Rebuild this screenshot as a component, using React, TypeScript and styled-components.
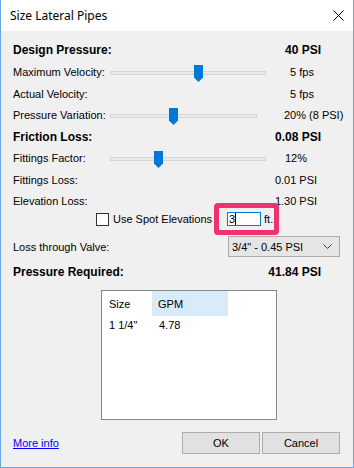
import styled, { createGlobalStyle } from "styled-components";

const GlobalStyle = createGlobalStyle`
  html, body {
    margin: 0;
    padding: 0;
    background: #f0f0f0;
  }
  body {
    font-family: "Liberation Sans", Arial, sans-serif;
    font-size: 11px;
    color: #000;
  }
`;

interface SliderProps {
  width: number;
  pos: number;
}

const Slider = ({ width, pos }: SliderProps) => (
  <SliderWrap $width={width}>
    <Track />
    <Thumb style={{ left: pos }}>
      <svg width="9" height="17" viewBox="0 0 9 17">
        <path d="M0 0H9V12.5L4.5 17L0 12.5Z" fill="#0078d7" />
      </svg>
    </Thumb>
  </SliderWrap>
);

const App = () => {
  return (
    <Window>
      <GlobalStyle />
      <TitleBar>
        <span className="title">Size Lateral Pipes</span>
        <svg width="11" height="11" viewBox="0 0 11 11">
          <path d="M0.5 0.5L10.5 10.5M10.5 0.5L0.5 10.5" stroke="#000" strokeWidth="1" />
        </svg>
      </TitleBar>

      <Content>
        <Row $h={22}>
          <Bold>Design Pressure:</Bold>
          <BoldValue>40 PSI</BoldValue>
        </Row>
        <Row $h={22}>
          <Label>Maximum Velocity:</Label>
          <Slider width={156} pos={84} />
          <Value $shift={6}>5 fps</Value>
        </Row>
        <Row $h={21}>
          <Label>Actual Velocity:</Label>
          <Spacer $width={156} />
          <Value $shift={6}>5 fps</Value>
        </Row>
        <Row $h={22}>
          <Label>Pressure Variation:</Label>
          <Slider width={147} pos={59} />
          <Value $shift={9}>20% (8 PSI)</Value>
        </Row>
        <Row $h={21}>
          <Bold>Friction Loss:</Bold>
          <BoldValue>0.08 PSI</BoldValue>
        </Row>
        <Row $h={22}>
          <Label>Fittings Factor:</Label>
          <Slider width={156} pos={44} />
          <Value>12%</Value>
        </Row>
        <Row $h={22}>
          <Label>Fittings Loss:</Label>
          <Spacer $width={156} />
          <Value>0.01 PSI</Value>
        </Row>
        <Row $h={19}>
          <Label>Elevation Loss:</Label>
          <Spacer $width={156} />
          <Value>1.30 PSI</Value>
        </Row>

        <CheckRow>
          <CheckBox />
          <CheckLabel>Use Spot Elevations</CheckLabel>
          <Highlighted>
            <TextBox>
              3<Caret />
            </TextBox>
            <Unit>ft.</Unit>
            <Ring />
          </Highlighted>
        </CheckRow>

        <ValveRow>
          <Label>Loss through Valve:</Label>
          <Select>
            <span>3/4" - 0.45 PSI</span>
            <svg width="9" height="5" viewBox="0 0 9 5">
              <path d="M0.5 0.5L4.5 4.5L8.5 0.5" stroke="#444" fill="none" strokeWidth="1" />
            </svg>
          </Select>
        </ValveRow>

        <Row $h={22} style={{ marginTop: 4 }}>
          <Bold>Pressure Required:</Bold>
          <BoldValue>41.84 PSI</BoldValue>
        </Row>

        <ListView>
          <ListHeader>
            <Cell $w={50} $pad={7}>Size</Cell>
            <Cell $w={76} $pad={6} $active>GPM</Cell>
          </ListHeader>
          <ListRow>
            <Cell $w={50} $pad={7}>1 1/4"</Cell>
            <Cell $w={76} $pad={7}>4.78</Cell>
          </ListRow>
        </ListView>
      </Content>

      <Footer>
        <Link href="#">More info</Link>
        <Buttons>
          <Button>OK</Button>
          <Button>Cancel</Button>
        </Buttons>
      </Footer>
    </Window>
  );
};

export default App;

const Window = styled.div`
  width: 354px;
  height: 468px;
  box-sizing: border-box;
  border: 1px solid #6aa6e8;
  border-top: none;
  background: #f0f0f0;
  display: flex;
  flex-direction: column;
`;

const TitleBar = styled.div`
  height: 31px;
  background: #fff;
  display: flex;
  align-items: center;
  justify-content: space-between;
  padding: 0 9px 0 9px;
  flex-shrink: 0;

  & .title {
    font-family: "Noto Sans", "Open Sans", sans-serif;
    font-size: 12px;
    color: #000;
  }
`;

const Content = styled.div`
  padding: 8px 27px 0 12px;
  display: flex;
  flex-direction: column;
`;

const Row = styled.div<{ $h: number }>`
  height: ${(p) => p.$h}px;
  display: flex;
  align-items: center;
`;

const Label = styled.span`
  width: 97px;
  flex-shrink: 0;
  white-space: nowrap;
`;

const Bold = styled.span`
  flex: 1;
  font-weight: bold;
  font-size: 12px;
  white-space: nowrap;
`;

const BoldValue = styled.span`
  font-weight: bold;
  font-size: 12px;
  padding-right: 5px;
`;

const Value = styled.span<{ $shift?: number }>`
  flex: 1;
  text-align: center;
  white-space: nowrap;
  padding-left: ${(p) => (p.$shift ? p.$shift * 2 : 0)}px;
`;

const Spacer = styled.div<{ $width: number }>`
  width: ${(p) => p.$width}px;
  flex-shrink: 0;
`;

const SliderWrap = styled.div<{ $width: number }>`
  position: relative;
  width: ${(p) => p.$width}px;
  height: 17px;
  margin-top: 3px;
  margin-right: ${(p) => 156 - p.$width}px;
  flex-shrink: 0;
`;

const Track = styled.div`
  position: absolute;
  left: 0;
  right: 0;
  top: 6px;
  height: 2px;
  background: #e7eaea;
  border: 1px solid #d6d6d6;
`;

const Thumb = styled.div`
  position: absolute;
  top: 0;
  width: 9px;
  height: 17px;
  line-height: 0;
`;

const CheckRow = styled.div`
  height: 18px;
  display: flex;
  align-items: center;
  padding-left: 83px;
`;

const CheckBox = styled.span`
  width: 11px;
  height: 11px;
  border: 1px solid #333;
  background: #fff;
  flex-shrink: 0;
`;

const CheckLabel = styled.span`
  margin-left: 4px;
  white-space: nowrap;
`;

const Highlighted = styled.span`
  position: relative;
  display: flex;
  align-items: center;
  margin-left: 15px;
`;

const TextBox = styled.span`
  width: 31px;
  height: 12px;
  border: 1px solid #0078d7;
  background: #fff;
  display: flex;
  align-items: center;
  padding-left: 1px;
  box-sizing: content-box;
  font-size: 11px;
  line-height: 12px;
`;

const Caret = styled.span`
  display: inline-block;
  width: 1px;
  height: 12px;
  background: #000;
`;

const Unit = styled.span`
  margin-left: 3px;
`;

const Ring = styled.span`
  position: absolute;
  top: -9px;
  left: -13px;
  right: -6px;
  bottom: -9px;
  border: 5px solid #f0316f;
  border-radius: 4px;
  pointer-events: none;
`;

const ValveRow = styled.div`
  height: 21px;
  margin-top: 8px;
  margin-right: -14px;
  display: flex;
  align-items: center;
  justify-content: space-between;
`;

const Select = styled.div`
  width: 100px;
  height: 19px;
  background: #e5e5e5;
  border: 1px solid #acacac;
  display: flex;
  align-items: center;
  justify-content: space-between;
  padding: 0 7px 0 3px;
  box-sizing: content-box;
`;

const ListView = styled.div`
  margin: 7px 0 0 88px;
  width: 174px;
  height: 128px;
  border: 1px solid #828790;
  background: #fff;
`;

const ListHeader = styled.div`
  display: flex;
  height: 25px;
  align-items: stretch;
`;

const ListRow = styled.div`
  display: flex;
  height: 17px;
  align-items: center;
`;

const Cell = styled.span<{ $w: number; $pad: number; $active?: boolean }>`
  width: ${(p) => p.$w}px;
  padding-left: ${(p) => p.$pad}px;
  box-sizing: border-box;
  display: flex;
  align-items: center;
  background: ${(p) => (p.$active ? "#d9ebf9" : "transparent")};
`;

const Footer = styled.div`
  margin-top: auto;
  height: 22px;
  display: flex;
  align-items: center;
  justify-content: space-between;
  padding: 0 13px 13px 12px;
`;

const Link = styled.a`
  color: #0000ff;
  text-decoration: underline;
`;

const Buttons = styled.div`
  display: flex;
  gap: 2px;
`;

const Button = styled.button`
  width: 78px;
  height: 22px;
  background: #e1e1e1;
  border: 1px solid #adadad;
  font-family: "Liberation Sans", Arial, sans-serif;
  font-size: 11px;
  color: #000;
  padding: 0;
`;
